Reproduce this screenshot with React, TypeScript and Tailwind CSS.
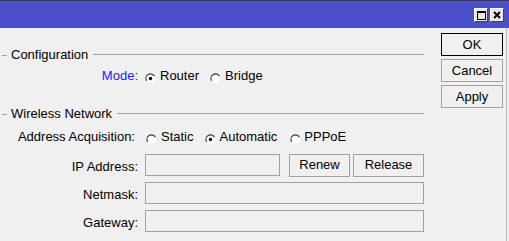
import React from "react";

function Radio({ checked }: { checked?: boolean }) {
  return (
    <svg width="11" height="11" viewBox="0 0 11 11" className="shrink-0 translate-y-[2px]">
      <circle cx="5.5" cy="5.5" r="4.5" fill="#ffffff" />
      <path d="M1.6 7.8 A4.5 4.5 0 0 1 9.4 3.2" fill="none" stroke="#3a3a3a" strokeWidth="1.2" />
      {checked && <circle cx="5.5" cy="5.5" r="1.7" fill="#000000" />}
    </svg>
  );
}

function GroupHeader({ title }: { title: string }) {
  return (
    <div className="flex h-[16px] items-center">
      <div className="ml-[2px] h-px w-[5px] bg-[#a0a0a0]" />
      <span className="ml-[4px] leading-[16px]">{title}</span>
      <div className="ml-[5px] h-px flex-1 -translate-y-[1px] bg-[#a0a0a0]" />
    </div>
  );
}

function Btn({ children, def, className = "" }: { children: React.ReactNode; def?: boolean; className?: string }) {
  return (
    <div
      className={
        "flex h-[23px] items-center justify-center border bg-[#f0f0f0] leading-[16px] " +
        (def ? "border-[#000000] " : "border-[#a0a0a0] ") +
        className
      }
    >
      {children}
    </div>
  );
}

function Field({ className = "" }: { className?: string }) {
  return <div className={"h-[22px] border border-[#a0a0a0] bg-[#f0f0f0] " + className} />;
}

export default function App() {
  return (
    <div className="relative h-[241px] w-[509px] overflow-hidden bg-[#f0f0f0] font-['Liberation_Sans',Arial,sans-serif] text-[13px] text-black">
      <div className="h-px bg-[#3c3c3c]" />
      <div className="flex h-[27px] items-start justify-end gap-[2px] bg-[#4b4fc9] pr-[5px] pt-[7px]">
        <div className="flex h-[14px] w-[14px] items-center justify-center border border-t-[#ffffff] border-l-[#ffffff] border-r-[#404040] border-b-[#404040] bg-[#e8e8e8]">
          <div className="h-[9px] w-[9px] border border-t-2 border-[#000000]" />
        </div>
        <div className="flex h-[14px] w-[14px] items-center justify-center border border-t-[#ffffff] border-l-[#ffffff] border-r-[#404040] border-b-[#404040] bg-[#e8e8e8]">
          <svg width="8" height="8" viewBox="0 0 8 8">
            <path d="M1 1 L7 7 M7 1 L1 7" stroke="#000" strokeWidth="1.8" />
          </svg>
        </div>
      </div>
      <div className="mr-[2px] flex h-[213px] border-r border-[#b8b8b8]">
        <div className="w-[424px] pt-[19px]">
          <GroupHeader title="Configuration" />
          <div className="mt-[5px] flex h-[16px] items-center leading-[16px]">
            <span className="w-[138px] text-right text-[#2020ff]">Mode:</span>
            <span className="ml-[7px] flex items-center">
              <Radio checked />
              <span className="ml-[4px]">Router</span>
            </span>
            <span className="ml-[11px] flex items-center">
              <Radio />
              <span className="ml-[4px]">Bridge</span>
            </span>
          </div>
          <div className="mt-[22px]">
            <GroupHeader title="Wireless Network" />
          </div>
          <div className="mt-[7px] flex h-[16px] items-center leading-[16px]">
            <span className="w-[135px] text-right">Address Acquisition:</span>
            <span className="ml-[11px] flex items-center">
              <Radio />
              <span className="ml-[4px]">Static</span>
            </span>
            <span className="ml-[11px] flex items-center">
              <Radio checked />
              <span className="ml-[4px]">Automatic</span>
            </span>
            <span className="ml-[13px] flex items-center">
              <Radio />
              <span className="ml-[3px]">PPPoE</span>
            </span>
          </div>
          <div className="mt-[9px] flex h-[22px] items-center leading-[16px]">
            <span className="w-[138px] pt-[3px] text-right">IP Address:</span>
            <Field className="ml-[7px] w-[135px]" />
            <Btn className="ml-[9px] h-[22px] w-[61px]">Renew</Btn>
            <Btn className="ml-[3px] h-[22px] w-[71px]">Release</Btn>
          </div>
          <div className="mt-[6px] flex h-[22px] items-center leading-[16px]">
            <span className="w-[138px] pt-[3px] text-right">Netmask:</span>
            <Field className="ml-[7px] flex-1" />
          </div>
          <div className="mt-[6px] flex h-[22px] items-center leading-[16px]">
            <span className="w-[138px] pt-[3px] text-right">Gateway:</span>
            <Field className="ml-[7px] flex-1" />
          </div>
        </div>
        <div className="ml-[17px] flex w-[62px] flex-col gap-[3px] pt-[5px]">
          <Btn def>OK</Btn>
          <Btn>Cancel</Btn>
          <Btn>Apply</Btn>
        </div>
      </div>
    </div>
  );
}
